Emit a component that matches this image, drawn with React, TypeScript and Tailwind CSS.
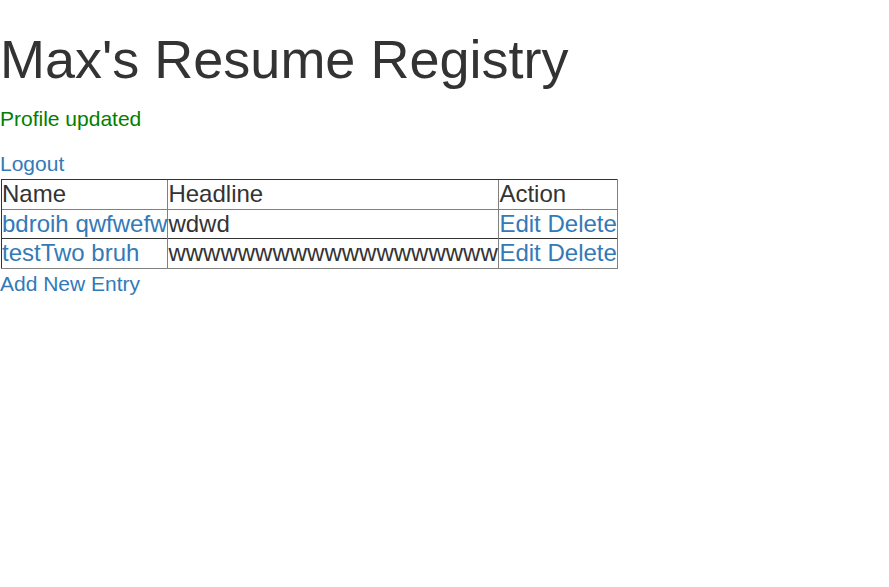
export default function App() {
  const dark = "border-[#333333]";
  return (
    <div className="bg-white min-h-[587px] text-[#333333]" style={{ fontFamily: '"Liberation Sans", Arial, sans-serif' }}>
      <h1 className="text-[54px] leading-[59.4px] pt-[30px] mb-[15px] font-normal">Max's Resume Registry</h1>
      <p className="text-[21px] leading-[30px] text-[#008000] mb-[15px]">Profile updated</p>
      <p className="text-[21px] leading-[30px]">
        <a className="text-[#337ab7]">Logout</a>
      </p>
      <table className="border-collapse text-[24px] leading-[28.5px] ml-px" style={{ tableLayout: "fixed" }}>
        <colgroup>
          <col style={{ width: 166 }} />
          <col style={{ width: 331 }} />
          <col style={{ width: 119 }} />
        </colgroup>
        <tbody>
          <tr>
            <th className={`font-normal text-left p-0 border-t border-l ${dark}`}>Name</th>
            <th className={`font-normal text-left p-0 border-t ${dark} border-l-[1px] border-l-[#808080]`}>Headline</th>
            <th className={`font-normal text-left p-0 border-t ${dark} border-l-[1px] border-l-[#808080] border-r border-r-[#808080]`}>Action</th>
          </tr>
          <tr>
            <td className={`p-0 border-t border-t-[#808080] border-l ${dark} text-[#337ab7] whitespace-nowrap`}>bdroih qwfwefw</td>
            <td className="p-0 border-t border-t-[#808080] border-l border-l-[#808080]">wdwd</td>
            <td className="p-0 border-t border-t-[#808080] border-l border-l-[#808080] border-r border-r-[#808080] text-[#337ab7] whitespace-nowrap">Edit Delete</td>
          </tr>
          <tr>
            <td className={`p-0 border-t border-l ${dark} border-b border-b-[#808080] text-[#337ab7] whitespace-nowrap`}>testTwo bruh</td>
            <td className={`p-0 border-t ${dark} border-l border-l-[#808080] border-b border-b-[#808080] whitespace-nowrap overflow-visible`}>wwwwwwwwwwwwwwwwwww</td>
            <td className={`p-0 border-t ${dark} border-l border-l-[#808080] border-r border-r-[#808080] border-b border-b-[#808080] text-[#337ab7] whitespace-nowrap`}>Edit Delete</td>
          </tr>
        </tbody>
      </table>
      <p className="text-[21px] leading-[30px]">
        <a className="text-[#337ab7]">Add New Entry</a>
      </p>
    </div>
  );
}
